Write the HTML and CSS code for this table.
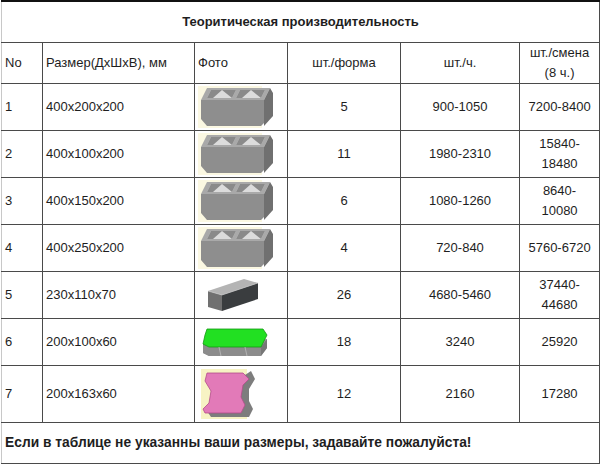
FILE: index.html
```html
<!DOCTYPE html>
<html lang="ru">
<head>
<meta charset="utf-8">
<title>Теоритическая производительность</title>
<link rel="stylesheet" href="styles.css">
</head>
<body>
<table class="perf">
  <colgroup>
    <col class="c-no"><col class="c-size"><col class="c-photo"><col class="c-form"><col class="c-hour"><col class="c-shift">
  </colgroup>
  <tr class="r-title"><td colspan="6" class="title">Теоритическая производительность</td></tr>
  <tr class="r-head">
    <td>No</td><td>Размер(ДхШхВ), мм</td><td>Фото</td><td class="ctr">шт./форма</td><td class="ctr">шт./ч.</td><td class="ctr">шт./смена<br>(8&nbsp;ч.)</td>
  </tr>
  <tr class="r-std">
    <td>1</td><td>400x200x200</td>
    <td class="photo"><svg class="pic" width="76" height="42" viewBox="0 0 76 42"><use href="#hollow"/></svg></td>
    <td class="ctr">5</td><td class="ctr">900-1050</td><td class="ctr">7200-8400</td>
  </tr>
  <tr class="r-std">
    <td>2</td><td>400x100x200</td>
    <td class="photo"><svg class="pic" width="76" height="42" viewBox="0 0 76 42"><use href="#hollow"/></svg></td>
    <td class="ctr">11</td><td class="ctr">1980-2310</td><td class="ctr">15840-<br>18480</td>
  </tr>
  <tr class="r-std">
    <td>3</td><td>400x150x200</td>
    <td class="photo"><svg class="pic" width="76" height="42" viewBox="0 0 76 42"><use href="#hollow"/></svg></td>
    <td class="ctr">6</td><td class="ctr">1080-1260</td><td class="ctr">8640-<br>10080</td>
  </tr>
  <tr class="r-std">
    <td>4</td><td>400x250x200</td>
    <td class="photo"><svg class="pic" width="76" height="42" viewBox="0 0 76 42"><use href="#hollow"/></svg></td>
    <td class="ctr">4</td><td class="ctr">720-840</td><td class="ctr">5760-6720</td>
  </tr>
  <tr class="r-std">
    <td>5</td><td>230x110x70</td>
    <td class="photo">
      <svg class="pic solid" width="54" height="36" viewBox="0 0 54 36">
        <polygon points="2,14 38,2 52,6 16,18" fill="#b4b4b4"/>
        <polygon points="2,14 16,18 16,34 2,30" fill="#707070"/>
        <polygon points="16,18 52,6 52,22 16,34" fill="#3a3d3f"/>
        <polyline points="2,14 16,18 52,6" fill="none" stroke="#d0d0d0" stroke-width="0.6"/>
      </svg>
    </td>
    <td class="ctr">26</td><td class="ctr">4680-5460</td><td class="ctr">37440-<br>44680</td>
  </tr>
  <tr class="r-std">
    <td>6</td><td>200x100x60</td>
    <td class="photo">
      <svg class="pic green" width="68" height="30" viewBox="0 0 68 30">
        <polygon points="2,17 2,26 8,29 60,29 66,21 66,12" fill="#9a9a9a"/>
        <polygon points="2,17 8,20 60,20 60,29 8,29 2,26" fill="#8c8c8c"/>
        <polygon points="60,20 66,12 66,21 60,29" fill="#777"/>
        <polygon points="6,2 62,2 66,8 60,20 8,20 2,17 4,8" fill="#22e022" stroke="#119911" stroke-width="0.8"/>
        <line x1="18" y1="20" x2="20" y2="29" stroke="#bbb" stroke-width="0.8"/>
        <line x1="44" y1="20" x2="46" y2="29" stroke="#bbb" stroke-width="0.8"/>
      </svg>
    </td>
    <td class="ctr">18</td><td class="ctr">3240</td><td class="ctr">25920</td>
  </tr>
  <tr class="r-tall">
    <td>7</td><td>200x163x60</td>
    <td class="photo">
      <svg class="pic pink" width="56" height="50" viewBox="0 0 56 50">
        <rect x="0" y="0" width="46" height="50" fill="#f7f3c4"/>
        <polygon points="10,6 44,6 50,2 54,10 48,20 48,32 52,40 48,48 10,48 6,42 8,36 14,32 14,22 10,14" fill="#7d7d7d"/>
        <polygon points="6,4 42,4 48,10 42,16 40,28 44,36 40,44 4,44 2,40 8,34 10,22 4,12" fill="#e27ab8" stroke="#b24c8c" stroke-width="0.8"/>
      </svg>
    </td>
    <td class="ctr">12</td><td class="ctr">2160</td><td class="ctr">17280</td>
  </tr>
  <tr class="r-foot"><td colspan="6" class="foot">Если в таблице не указанны ваши размеры, задавайте пожалуйста!</td></tr>
</table>

<svg class="defs" width="0" height="0">
  <defs>
    <g id="hollow">
      <rect x="0" y="0" width="64" height="42" fill="#fbf8e2"/>
      <polygon points="9,2 72,2 66,14 3,14" fill="#a9a9a9"/>
      <polygon points="13,4 38,4 34,12 9,12" fill="#dcdcdc"/>
      <polygon points="13,4 24,4 15,12 9,12" fill="#8a8a8a"/>
      <polygon points="24,4 38,4 34,12" fill="#8a8a8a"/>
      <polygon points="42,4 67,4 63,12 38,12" fill="#dcdcdc"/>
      <polygon points="42,4 53,4 44,12 38,12" fill="#8a8a8a"/>
      <polygon points="53,4 67,4 63,12" fill="#8a8a8a"/>
      <polygon points="3,14 66,14 66,37 63,40 9,40 3,33" fill="#8e8e8e"/>
      <polygon points="66,14 72,2 75,7 75,30 66,40" fill="#707070"/>
    </g>
  </defs>
</svg>
</body>
</html>
```

FILE: styles.css
```css
html, body {
  margin: 0;
  padding: 0;
  background: #ffffff;
}

body {
  font-family: "Liberation Sans", Arial, sans-serif;
  font-size: 13px;
  color: #1e1e1e;
}

.perf {
  margin-left: 1px;
  width: 598px;
  border-collapse: collapse;
  table-layout: fixed;
  border-top: 2px solid #111;
}

.c-no { width: 41px; }
.c-size { width: 152px; }
.c-photo { width: 93px; }
.c-form { width: 113px; }
.c-hour { width: 119px; }
.c-shift { width: 80px; }

.perf td {
  border: 1px solid #4a4a4a;
  padding: 0 3px;
  vertical-align: middle;
  line-height: 20px;
}

.perf tr > td:first-child {
  border-left-color: #c8c8c8;
}

.ctr { text-align: center; }

.r-title { height: 41px; }
.r-head { height: 41px; }
.r-std { height: 47px; }
.r-tall { height: 57px; }
.r-foot { height: 41px; }

.title {
  text-align: center;
  font-weight: bold;
}

.foot {
  font-weight: bold;
  font-size: 13.8px;
}

.photo {
  padding: 0 0 0 9px;
}

.pic {
  display: block;
}

.solid { margin-left: 8px; }
.green { margin-left: 3px; }
.pink { margin-left: 3px; }

.defs {
  position: absolute;
  width: 0;
  height: 0;
}
```
